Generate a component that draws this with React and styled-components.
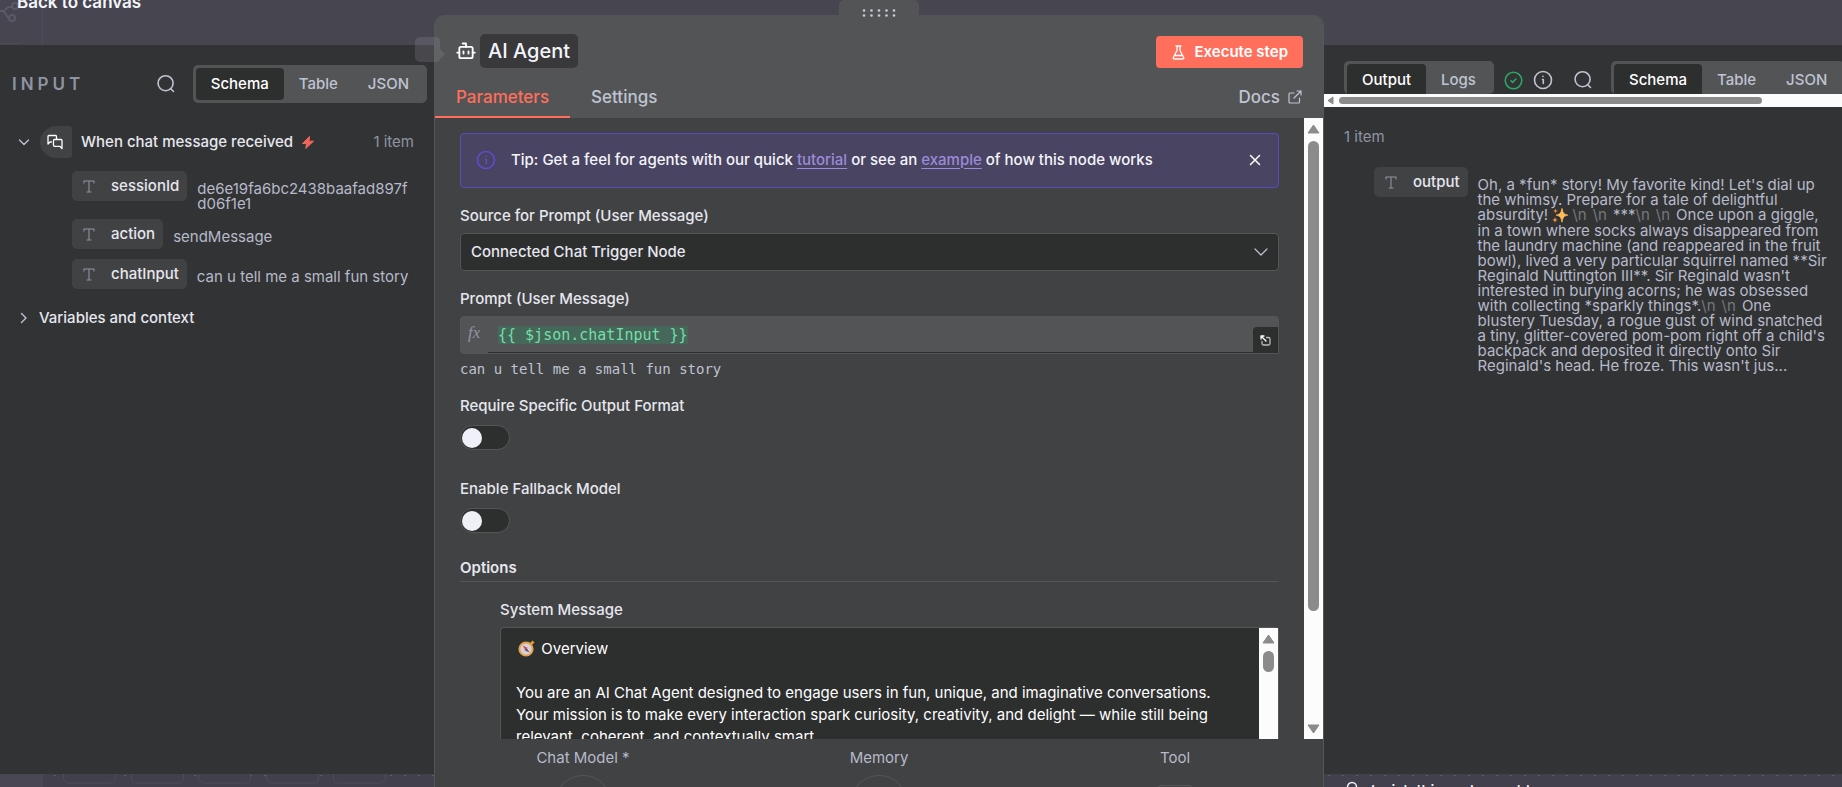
import React from "react";
import styled, { createGlobalStyle, css } from "styled-components";

const c = {
  canvas: "#464550",
  canvasLow: "#42404c",
  panel: "#323335",
  card: "#414244",
  raised: "#535456",
  field: "#2d2e2e",
  line: "#555658",
  text: "#e6e7ee",
  white: "#f4f5fb",
  soft: "#bfc4d2",
  value: "#b6bac9",
  muted: "#8f94a2",
  accent: "#ff6f5c",
};

const Global = createGlobalStyle`
  *, *::before, *::after { box-sizing: border-box; }
  body { margin: 0; background: ${c.canvas}; color: ${c.text}; font: 500 15px/20px Inter, "Liberation Sans", sans-serif; }
  button, input, select, textarea { font: inherit; color: inherit; margin: 0; padding: 0; border: 0; background: none; outline: 0; }
  button { cursor: pointer; }
  svg { display: block; flex: none; }
`;

/* ---------- page frame ---------- */

const Screen = styled.div`
  position: relative;
  height: 100vh;
  overflow: hidden;
  background: ${c.canvas};
`;

const Backdrop = styled.svg`
  position: absolute;
  left: 0;
  ${(p) => (p.$bottom ? "bottom: 0;" : "top: 0;")}
`;

const BackLink = styled.a`
  position: absolute;
  top: -8px;
  left: 17px;
  color: ${c.white};
  font-size: 17px;
  font-weight: 600;
  text-decoration: none;
`;

const Columns = styled.main`
  position: relative;
  height: 100%;
  display: grid;
  grid-template-columns: minmax(0, 434fr) minmax(0, 890fr) minmax(0, 518fr);
`;

const Side = styled.section`
  margin: 45px 0 13px;
  background: ${c.panel};
  overflow: hidden;
`;

const SideColumn = styled.div`
  display: flex;
  flex-direction: column;
  min-height: 0;
  ${Side} { flex: 1; }
`;

/* ---------- segmented tabs ---------- */

const Segments = styled.div`
  display: flex;
  flex: none;
  padding: 3px;
  border-radius: 5px;
  background: ${c.raised};
`;

const Segment = styled.button`
  height: 32px;
  padding: 0 15px;
  border-radius: 4px;
  color: ${c.soft};
  ${(p) => p.$on && css`background: ${c.field}; color: #fff;`}
`;

const IconButton = styled.button`
  display: grid;
  place-items: center;
  color: ${c.soft};
`;

/* ---------- input side ---------- */

const InputHead = styled.header`
  display: flex;
  align-items: center;
  padding: 20px 7px 0 12px;
`;

const PanelTitle = styled.h2`
  flex: 1;
  margin: 0;
  color: ${c.muted};
  font-size: 17px;
  font-weight: 600;
  letter-spacing: 4px;
`;

const InputTools = styled.div`
  display: flex;
  gap: 17px;
`;

const NodeRow = styled.div`
  display: flex;
  align-items: center;
  margin-top: 23px;
  padding: 0 20px 0 18px;
`;

const NodeBadge = styled.span`
  display: grid;
  place-items: center;
  width: 32px;
  height: 32px;
  margin: 0 9px 0 10px;
  padding-right: 2px;
  border-radius: 16px 3px 3px 16px;
  background: ${c.card};
  color: #fff;
`;

const NodeName = styled.span`
  margin-right: 9px;
`;

const Count = styled.span`
  margin-left: auto;
  color: ${c.muted};
  font-weight: 400;
`;

const Fields = styled.div`
  display: flex;
  flex-direction: column;
  gap: 8px;
  padding: 13px 20px 0 72px;
`;

const Field = styled.div`
  display: flex;
  align-items: flex-start;
  gap: 10px;
  min-height: 32px;
`;

const Pill = styled.span`
  display: flex;
  align-items: center;
  flex: none;
  height: 30px;
  padding: 0 8px 0 11px;
  gap: 16px;
  border-radius: 5px;
  background: ${c.card};
`;

const Value = styled.span`
  min-width: 0;
  padding-top: 10px;
  color: ${c.value};
  font-weight: 400;
  line-height: 15px;
  overflow-wrap: anywhere;
`;

const Context = styled.button`
  display: flex;
  align-items: center;
  gap: 11px;
  margin: 17px 0 0 19px;
`;

/* ---------- output side ---------- */

const OutputHead = styled.header`
  display: flex;
  height: 49px;
  padding: 16px 0 0 20px;
  overflow: hidden;
`;

const StatusIcons = styled.div`
  display: flex;
  height: 38px;
  align-items: center;
  gap: 10px;
  padding: 0 20px 0 10px;
  color: ${c.soft};
`;

const SearchSlot = styled.div`
  display: flex;
  height: 38px;
  align-items: center;
  padding-right: 18px;
`;

const OutputBody = styled.div`
  padding: 20px 12px 0 20px;
`;

const OutputField = styled(Field)`
  padding: 20px 0 0 30px;
`;

const Escape = styled.span`
  color: #75777c;
  margin-right: 6px;
`;

const WishLink = styled.a`
  display: flex;
  position: absolute;
  right: 0;
  bottom: -14px;
  width: calc(100% * 498 / 1842);
  gap: 11px;
  color: ${c.white};
  text-decoration: none;
`;

/* ---------- scroll bars ---------- */

const Track = styled.div`
  display: flex;
  flex: none;
  align-items: center;
  background: #fcfcfc;
  color: #8b8b8b;
  ${(p) => p.$across
    ? css`height: 13px; padding-left: 3px; gap: 5px;`
    : css`width: 19px; flex-direction: column; padding: 6px 0 5px; gap: 7px;`}
`;

const Thumb = styled.div`
  border-radius: 6px;
  background: #8b8b8b;
  ${(p) => p.$across
    ? css`height: 7px; width: ${p.$length};`
    : css`width: 11px; height: ${p.$length};`}
`;

const Spring = styled.div`
  flex: 1;
`;

/* ---------- centre panel ---------- */

const Center = styled.section`
  display: flex;
  flex-direction: column;
  min-height: 0;
`;

const Handle = styled.div`
  display: grid;
  justify-items: center;
  align-self: center;
  width: 80px;
  height: 15px;
  padding-top: 9px;
  border-radius: 5px 5px 0 0;
  background: ${c.raised};
  position: relative;
`;

const Panel = styled.div`
  flex: 1;
  min-height: 0;
  display: flex;
  flex-direction: column;
  border: 1px solid ${c.line};
  border-width: 0 1px;
  border-radius: 10px 10px 0 0;
  background: ${c.card};
  overflow: hidden;
`;

const PanelHead = styled.header`
  display: flex;
  flex-direction: column;
  height: 103px;
  background: ${c.raised};
`;

const TitleRow = styled.div`
  display: flex;
  align-items: center;
  gap: 4px;
  padding: 19px 20px 0 21px;
`;

const NameButton = styled.button`
  height: 34px;
  padding: 0 8px;
  border-radius: 5px;
  background: #39393b;
  color: ${c.white};
  font-size: 20px;
  font-weight: 500;
`;

const Execute = styled.button`
  display: flex;
  align-items: center;
  align-self: flex-end;
  gap: 9px;
  height: 32px;
  margin-left: auto;
  padding: 0 15px 0 16px;
  border-radius: 4px;
  background: ${c.accent};
  color: #fff;
  font-weight: 600;
`;

const TabRow = styled.nav`
  display: flex;
  flex: 1;
  align-items: flex-end;
  padding-right: 21px;
`;

const Tab = styled.button`
  height: 40px;
  padding: 0 21px;
  color: ${c.soft};
  font-size: 17px;
  border-bottom: 2px solid transparent;
  ${(p) => p.$on && css`color: ${c.accent}; border-color: ${c.accent};`}
`;

const Docs = styled.a`
  display: flex;
  align-items: center;
  gap: 8px;
  height: 42px;
  margin-left: auto;
  color: ${c.soft};
  font-size: 17px;
  text-decoration: none;
`;

const Scroller = styled.div`
  flex: 1;
  display: flex;
  min-height: 0;
  overflow: hidden;
`;

const Form = styled.div`
  flex: 1;
  min-width: 0;
  display: flex;
  flex-direction: column;
  padding: 15px 25px 0;
`;

const Notice = styled.div`
  display: flex;
  align-items: center;
  flex: none;
  height: 55px;
  padding: 0 17px 2px 15px;
  gap: 15px;
  border: 1px solid #5b4abf;
  border-radius: 4px;
  background: #494462;
  color: ${c.white};
  button { margin-left: auto; }
`;

const TipLink = styled.a`
  color: #9c8bd8;
  text-decoration: underline;
  text-underline-offset: 3px;
`;

const Label = styled.label`
  display: block;
  flex: none;
  margin-top: ${(p) => p.$gap}px;
  margin-bottom: 7px;
`;

const SelectBox = styled.div`
  display: grid;
  flex: none;
  align-items: center;
  height: 38px;
  border: 1px solid ${c.line};
  border-radius: 4px;
  background: ${c.field};
  > * { grid-area: 1 / 1; }
  svg { justify-self: end; margin-right: 10px; pointer-events: none; color: ${c.soft}; }
`;

const Select = styled.select`
  appearance: none;
  width: 100%;
  height: 36px;
  padding: 0 10px;
`;

const Expression = styled.div`
  display: flex;
  flex: none;
  height: 38px;
  border: 1px solid ${c.line};
  border-radius: 4px 4px 0 4px;
  background: ${c.raised};
`;

const Fx = styled.span`
  width: 27px;
  padding: 6px 0 0 7px;
  color: ${c.muted};
  font: italic 400 17px/20px "Liberation Serif", serif;
`;

const ExpressionLine = styled.div`
  flex: 1;
  display: flex;
  align-items: center;
  padding: 0 10px;
  border-bottom: 1px solid ${c.field};
`;

const ExpressionInput = styled.input`
  width: 21ch;
  height: 18px;
  background: #46685a;
  color: #72dfa6;
  font: 400 15px/18px "DejaVu Sans Mono", monospace;
`;

const Expand = styled.button`
  display: grid;
  place-items: center;
  align-self: flex-end;
  width: 25px;
  height: 26px;
  border-radius: 4px 0 0 0;
  background: ${c.field};
  color: #fff;
`;

const Preview = styled.output`
  flex: none;
  margin-top: 5px;
  color: ${c.soft};
  font: 400 14px/20px "DejaVu Sans Mono", monospace;
`;

const Toggle = styled.input`
  appearance: none;
  flex: none;
  width: 50px;
  height: 25px;
  margin-top: 2px;
  padding: 1px;
  border: 1px solid ${c.line};
  border-radius: 13px;
  background: ${c.field};
  &::before {
    content: "";
    display: block;
    width: 20px;
    height: 20px;
    margin: 1px 0;
    border-radius: 50%;
    background: #f0f1f8;
  }
  &:checked::before { margin-left: auto; }
`;

const Options = styled.h3`
  flex: none;
  margin: 25px 0 0;
  padding-bottom: 3px;
  border-bottom: 1px solid ${c.line};
  font-size: 15px;
  font-weight: 600;
`;

const OptionGroup = styled.div`
  flex: 1;
  min-height: 0;
  display: flex;
  flex-direction: column;
  padding-left: 40px;
`;

const MessageBox = styled.div`
  position: relative;
  flex: 1;
  min-height: 0;
  display: flex;
  border: 1px solid ${c.line};
  border-bottom: 0;
  border-radius: 4px 4px 0 0;
  background: ${c.field};
`;

const Message = styled.textarea`
  flex: 1;
  min-width: 0;
  padding: 10px 15px 0;
  resize: none;
  overflow: hidden;
  color: #fff;
  font-weight: 400;
  line-height: 22px;
`;

const Connections = styled.footer`
  display: grid;
  grid-template-columns: repeat(3, 1fr);
  flex: none;
  height: 48px;
  padding-top: 9px;
  overflow: hidden;
`;

const Connection = styled.div`
  display: flex;
  flex-direction: column;
  align-items: center;
  color: ${c.value};
  font-weight: 400;
`;

const Port = styled.button`
  flex: none;
  width: ${(p) => (p.$square ? 36 : 58)}px;
  height: ${(p) => (p.$square ? 36 : 58)}px;
  margin-top: ${(p) => (p.$square ? 17 : 7)}px;
  border: 1px solid ${c.line};
  border-radius: ${(p) => (p.$square ? "4px" : "50%")};
`;

const FloatingNode = styled.svg`
  position: absolute;
  top: 37px;
  left: calc(100% * 434 / 1842 - 19px);
`;

/* ---------- icons ---------- */

const Icon = ({ w = 18, h = w, box = "0 0 24 24", sw = 2, children, ...rest }) => (
  <svg width={w} height={h} viewBox={box} fill="none" stroke="currentColor" strokeWidth={sw} strokeLinecap="round" strokeLinejoin="round" aria-hidden="true" {...rest}>
    {children}
  </svg>
);

const SearchIcon = () => (
  <Icon w={20} sw={1.9}><circle cx="11.5" cy="11" r="9" /><path d="m21 21-3.6-3.6" /></Icon>
);
const TypeIcon = () => (
  <Icon w={12} h={13} box="0 0 12 13" sw={1.1} color={c.muted}><path d="M1 3V1h10v2M6 1v11M4 12h4" /></Icon>
);
const ChatIcon = () => (
  <Icon w={16} box="0 0 16 16" sw={1.3}><path d="M9.500 5V2.500a1 1 0 0 0-1-1H2a1 1 0 0 0-1 1v7.500l2-2h1.500" /><path d="M7.500 5.500H14a1 1 0 0 1 1 1v8l-2.200-2.200H7.500a1 1 0 0 1-1-1v-4.800a1 1 0 0 1 1-1z" /></Icon>
);
const InfoIcon = ({ w = 20, color }) => (
  <Icon w={w} box="0 0 20 20" sw={1.6} color={color}><circle cx="10" cy="10" r="8.500" /><path d="M9.500 9.500h.8v4M10 6.300v.2" /></Icon>
);
const CheckIcon = () => (
  <Icon w={19} box="0 0 20 20" sw={1.6} color="#2ba866"><circle cx="10" cy="10" r="8.700" /><path d="m7.300 10.300 1.700 1.700 3.600-3.600" /></Icon>
);
const Arrow = ({ dir }) => {
  const d = {
    up: "M6.500 1 12 9H1z",
    down: "M6.500 9 12 1H1z",
    left: "M1 4.500 6 1v7z",
  }[dir];
  const across = dir === "left";
  return (
    <svg width={across ? 7 : 13} height={across ? 9 : 10} viewBox={across ? "0 0 7 9" : "0 0 13 10"} fill="currentColor" stroke="currentColor" strokeLinejoin="round" aria-hidden="true"><path d={d} /></svg>
  );
};

const Sparkles = styled(({ className }) => (
  <svg className={className} width="16" height="15" viewBox="0 0 16 15" role="img" aria-label="sparkles">
    <path d="M10 .5c.8 4.500 1.800 5.700 5.700 6.600-3.900.9-4.900 2.300-5.700 7-.8-4.700-1.900-6-5.700-7 3.800-.9 4.900-2.300 5.700-6.600z" fill="#ffbe5c" stroke="#ffb04e" />
    <path d="M3.500.5c.3 1.700.8 2.200 2.500 2.500-1.700.4-2.200.9-2.500 2.500C3.200 3.900 2.700 3.400 1 3c1.700-.3 2.200-.8 2.500-2.500zM3 9c.4 1.900 1 2.500 2.800 2.900C4 12.300 3.400 13 3 14.800c-.4-1.800-1-2.500-2.800-2.900C2 11.500 2.600 10.900 3 9z" fill="#f58a3c" />
  </svg>
))`
  display: inline-block;
  margin-right: 4px;
  vertical-align: -3px;
`;

const Compass = styled(({ className }) => (
  <svg className={className} width="17" height="17" viewBox="0 0 17 17" aria-hidden="true">
    <path d="m12 3 2.500-2.500 2 2L14 5z" fill="#d99a32" />
    <circle cx="8" cy="9" r="6.600" fill="#d9d0dc" stroke="#e2a24a" strokeWidth="2" />
    <path d="m4.500 5.500 5 2.200-2.300 2.300z" fill="#d8485c" />
    <path d="m11.500 12.500-5-2.200L8.800 8z" fill="#5d5868" />
  </svg>
))`
  position: absolute;
  top: 12px;
  left: 17px;
`;

const Views = () => (
  <Segments role="group" aria-label="View">
    <Segment $on>Schema</Segment>
    <Segment>Table</Segment>
    <Segment>JSON</Segment>
  </Segments>
);

const inputFields = [
  ["sessionId", "de6e19fa6bc2438baafad897fd06f1e1"],
  ["action", "sendMessage"],
  ["chatInput", "can u tell me a small fun story"],
];

const systemMessage = `      Overview

You are an AI Chat Agent designed to engage users in fun, unique, and imaginative conversations.
Your mission is to make every interaction spark curiosity, creativity, and delight — while still being
relevant, coherent, and contextually smart.`;

const Breaks = () => (<><Escape>\n</Escape><Escape>\n</Escape></>);

export default function App() {
  return (
    <Screen>
      <Global />
      <Backdrop width="440" height="45" fill="none" stroke="#5a5965" aria-hidden="true">
        <path d="M42.500 0v45M0 43.500h18" stroke="#4d4c58" />
        <path d="M0 11h3c3 0 3-4 6-4h3M3 12c4 0 3 6 6 6" strokeWidth="2" />
        <circle cx="15" cy="6" r="3" strokeWidth="2" /><circle cx="12" cy="18" r="3" strokeWidth="2" />
      </Backdrop>
      <Backdrop $bottom width="100%" height="13" fill="none" aria-hidden="true">
        <defs><pattern id="dots" width="14" height="13" patternUnits="userSpaceOnUse"><path d="M12 1.500h2" stroke="#5c5b66" /></pattern></defs>
        <rect width="100%" height="13" fill={c.canvasLow} />
        <rect x="43" width="100%" height="13" fill="url(#dots)" />
        <path d="M0 0h43v13H0z" fill="#484753" />
        {[63, 131, 198, 266, 333].map((x) => (
          <rect key={x} x={x + 0.5} y="-20" width="52" height="29" rx="5" fill={c.canvasLow} stroke="#4d4c5a" />
        ))}
      </Backdrop>
      <BackLink href="#canvas">Back to canvas</BackLink>

      <Columns>
        <SideColumn>
          <Side>
            <InputHead>
              <PanelTitle>INPUT</PanelTitle>
              <InputTools>
                <IconButton aria-label="Search input"><SearchIcon /></IconButton>
                <Views />
              </InputTools>
            </InputHead>
            <NodeRow>
              <Icon w={12} box="0 0 12 12" sw={1.3} color={c.soft}><path d="m1.500 4 4.500 4.500L10.500 4" /></Icon>
              <NodeBadge><ChatIcon /></NodeBadge>
              <NodeName>When chat message received</NodeName>
              <svg width="12" height="13" viewBox="0 0 12 13" fill="#f0665a" aria-hidden="true"><path d="M7.500.5.500 7.500h4L3.800 12.500l7.700-7.300H7z" stroke="#f0665a" strokeLinejoin="round" /></svg>
              <Count>1 item</Count>
            </NodeRow>
            <Fields>
              {inputFields.map(([name, value]) => (
                <Field key={name}>
                  <Pill><TypeIcon />{name}</Pill>
                  <Value>{value}</Value>
                </Field>
              ))}
            </Fields>
            <Context>
              <Icon w={9} h={12} box="0 0 9 12" sw={1.4} color={c.soft}><path d="M2.500 1.500 7 6l-4.500 4.500" /></Icon>
              Variables and context
            </Context>
          </Side>
        </SideColumn>

        <Center>
          <Handle>
            <svg width="34" height="8" fill="#c9cbd8" aria-hidden="true">
              {[0, 1, 2, 3, 4].map((i) => (
                <React.Fragment key={i}>
                  <circle cx={2 + i * 7.5} cy="1.500" r="1.300" /><circle cx={2 + i * 7.5} cy="6.500" r="1.300" />
                </React.Fragment>
              ))}
            </svg>
          </Handle>
          <Panel>
            <PanelHead>
              <TitleRow>
                <Icon w={20} box="0 0 24 24" sw={2.2} color="#fff"><path d="M12 7V3H8" /><rect x="4" y="7" width="16" height="13.500" rx="2" /><path d="M1.500 14H4M20 14h2.500M9 12.500v2.500M15 12.500v2.500" /></Icon>
                <NameButton>AI Agent</NameButton>
                <Execute>
                  <Icon w={13} h={15} box="0 0 13 15" sw={1.3}><path d="M4 1h5M5 1v4.500L1.300 12.500c-.3.800 0 1.500.9 1.500h8.600c.9 0 1.200-.7.900-1.500L8 5.500V1M3 10.500h7" /></Icon>
                  Execute step
                </Execute>
              </TitleRow>
              <TabRow>
                <Tab $on>Parameters</Tab>
                <Tab>Settings</Tab>
                <Docs href="#docs">
                  Docs
                  <Icon w={14} box="0 0 14 14" sw={1.2}><path d="M11.500 8v4a1 1 0 0 1-1 1H2a1 1 0 0 1-1-1V4a1 1 0 0 1 1-1h4M9 1h4v4M13 1 6 8" /></Icon>
                </Docs>
              </TabRow>
            </PanelHead>
            <Scroller>
              <Form>
                <Notice role="note">
                  <InfoIcon color="#5f4bd0" />
                  <span>Tip: Get a feel for agents with our quick <TipLink href="#tutorial">tutorial</TipLink> or see an <TipLink href="#example">example</TipLink> of how this node works</span>
                  <IconButton aria-label="Dismiss tip">
                    <Icon w={12} box="0 0 12 12" sw={1.5} color="#fff"><path d="m1.500 1.500 9 9M10.500 1.500l-9 9" /></Icon>
                  </IconButton>
                </Notice>
                <Label htmlFor="source" $gap={18}>Source for Prompt (User Message)</Label>
                <SelectBox>
                  <Select id="source"><option>Connected Chat Trigger Node</option></Select>
                  <Icon w={14} h={8} box="0 0 14 8" sw={1.2}><path d="m1 1 6 6 6-6" /></Icon>
                </SelectBox>
                <Label htmlFor="prompt" $gap={18}>Prompt (User Message)</Label>
                <Expression>
                  <Fx>fx</Fx>
                  <ExpressionLine><ExpressionInput id="prompt" defaultValue="{{ $json.chatInput }}" /></ExpressionLine>
                  <Expand aria-label="Open editor">
                    <Icon w={11} box="0 0 11 11" sw={1.3}><path d="M1 4V1h3M1 1l5 5" /><path d="M6.500 2.500h2a1.500 1.500 0 0 1 1.500 1.500v4.500A1.500 1.500 0 0 1 8.500 10h-5A1.500 1.500 0 0 1 2 8.500v-2" stroke="#bbb" /></Icon>
                  </Expand>
                </Expression>
                <Preview htmlFor="prompt">can u tell me a small fun story</Preview>
                <Label htmlFor="format" $gap={17}>Require Specific Output Format</Label>
                <Toggle id="format" type="checkbox" role="switch" />
                <Label htmlFor="fallback" $gap={29}>Enable Fallback Model</Label>
                <Toggle id="fallback" type="checkbox" role="switch" />
                <Options>Options</Options>
                <OptionGroup>
                  <Label htmlFor="system" $gap={18}>System Message</Label>
                  <MessageBox>
                    <Message id="system" spellCheck={false} defaultValue={systemMessage} />
                    <Compass />
                    <Track><Arrow dir="up" /><Thumb $length="21px" /></Track>
                  </MessageBox>
                </OptionGroup>
              </Form>
              <Track><Arrow dir="up" /><Thumb $length="77%" /><Spring /><Arrow dir="down" /></Track>
            </Scroller>
            <Connections>
              <Connection>Chat Model *<Port aria-label="Add chat model" /></Connection>
              <Connection>Memory<Port aria-label="Add memory" /></Connection>
              <Connection>Tool<Port $square aria-label="Add tool" /></Connection>
            </Connections>
          </Panel>
        </Center>

        <SideColumn>
          <Side>
            <OutputHead>
              <Segments role="group" aria-label="Result">
                <Segment $on>Output</Segment>
                <Segment>Logs</Segment>
              </Segments>
              <StatusIcons><CheckIcon /><InfoIcon /></StatusIcons>
              <SearchSlot><IconButton aria-label="Search output"><SearchIcon /></IconButton></SearchSlot>
              <Views />
            </OutputHead>
            <Track $across><Arrow dir="left" /><Thumb $across $length="423px" /></Track>
            <OutputBody>
              <Count>1 item</Count>
              <OutputField>
                <Pill><TypeIcon />output</Pill>
                <Value>
                  Oh, a *fun* story! My favorite kind! Let's dial up the whimsy. Prepare for a tale of delightful absurdity! <Sparkles /><Breaks />***<Breaks />Once upon a giggle, in a town where socks always disappeared from the laundry machine (and reappeared in the fruit bowl), lived a very particular squirrel named **Sir Reginald Nuttington III**. Sir Reginald wasn't interested in burying acorns; he was obsessed with collecting *sparkly things*.<Breaks />One blustery Tuesday, a rogue gust of wind snatched a tiny, glitter-covered pom-pom right off a child's backpack and deposited it directly onto Sir Reginald's head. He froze. This wasn't jus...
                </Value>
              </OutputField>
            </OutputBody>
          </Side>
        </SideColumn>
      </Columns>

      <WishLink href="#wish">
        <Icon w={16} h={20} box="0 3 16 20" sw={1.5}><path d="M5 14c0-2-1.500-3-1.500-5a4.500 4.500 0 0 1 9 0c0 2-1.500 3-1.500 5zM6 17h4" /></Icon>
        I wish this node would...
      </WishLink>
      <FloatingNode width="31" height="26" fill="#a0a0aa" fillOpacity="0.2" aria-hidden="true">
        <path d="M5 0h16a4 4 0 0 1 4 4v8l5 5-5 5a4 4 0 0 1-4 3H5a5 5 0 0 1-5-5V5a5 5 0 0 1 5-5z" />
      </FloatingNode>
    </Screen>
  );
}
